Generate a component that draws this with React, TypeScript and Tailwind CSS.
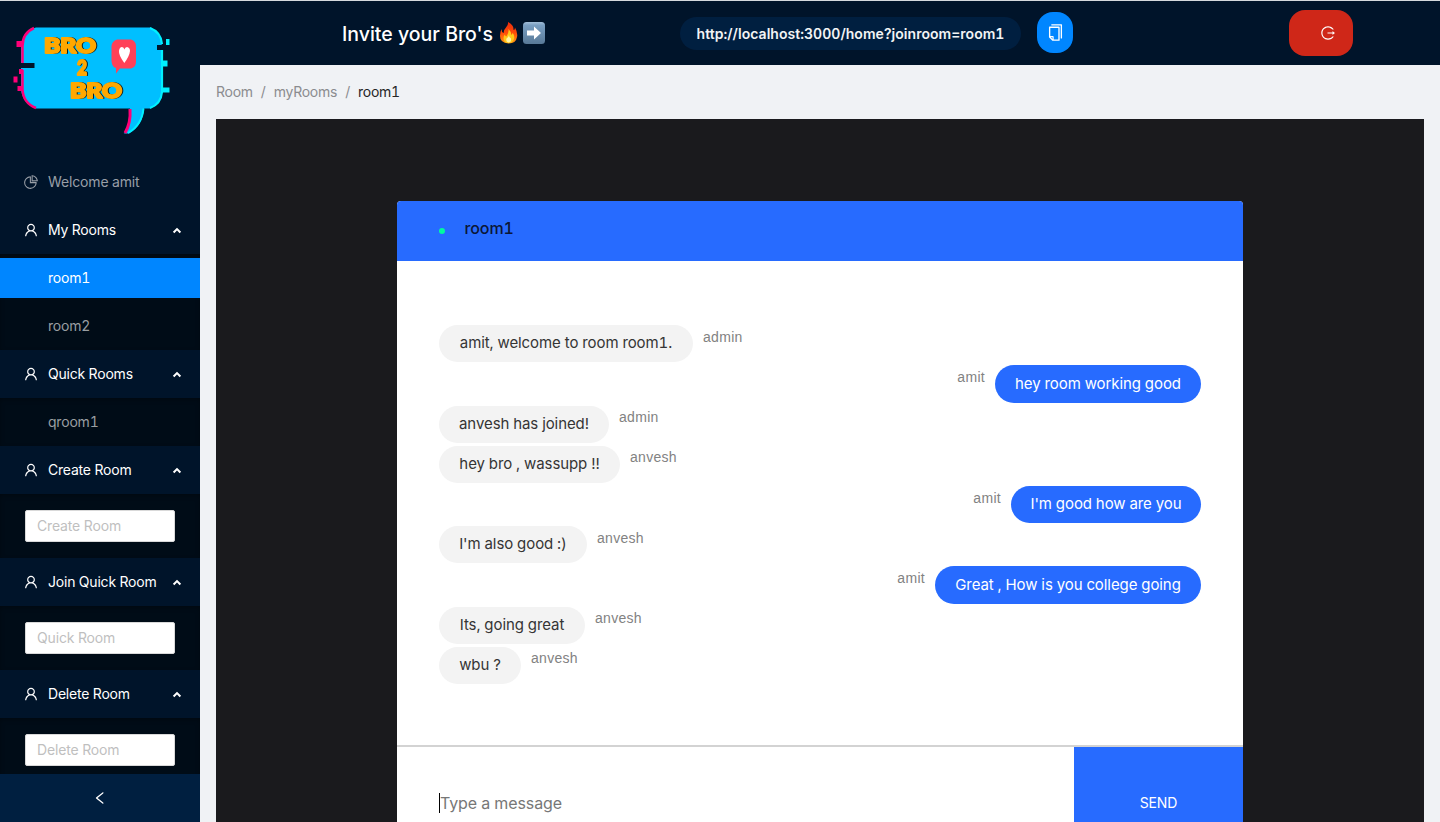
import React from "react";
import {
  AiOutlineCopy,
  AiOutlineLeft,
  AiOutlineLogout,
  AiOutlinePieChart,
  AiOutlineUser,
} from "react-icons/ai";

type Message = { user: string; text: string; width: string };

const messages: Message[] = [
  { user: "admin", text: "amit, welcome to room room1.", width: "w-[254px]" },
  { user: "amit", text: "hey room working good", width: "w-[206px]" },
  { user: "admin", text: "anvesh has joined!", width: "w-[170px]" },
  { user: "anvesh", text: "hey bro , wassupp !!", width: "w-[181px]" },
  { user: "amit", text: "I'm good how are you", width: "w-[190px]" },
  { user: "anvesh", text: "I'm also good :)", width: "w-[148px]" },
  { user: "amit", text: "Great , How is you college going", width: "w-[266px]" },
  { user: "anvesh", text: "Its, going great", width: "w-[146px]" },
  { user: "anvesh", text: "wbu ?", width: "w-[82px]" },
];

function Logo() {
  return (
    <svg width="200" height="157" viewBox="0 0 200 157" className="block shrink-0">
      <path d="M36 26.500H151Q162 33 162 46V91Q161 104 150 107.500H36Q22 102 21 88V47Q22 30 36 26.500Z" fill="#00bfff" />
      <path d="M34 27Q22.500 32 22.500 45V62M22.500 69V88Q23 102 36 107" fill="none" stroke="#ff0078" strokeWidth="2.500" />
      <path d="M16.500 40h6v6h-6zM19 68h4v5h-4zM13.500 75.500h4v6h-4zM17.500 85h5v5h-5z" fill="#ff0078" />
      <path d="M150 27Q161 31 162 43M162 49V91Q161 103 150 107" fill="none" stroke="#00f0ff" strokeWidth="2.200" />
      <path d="M166 38h3.500v6H166zM162 59.500h5.500v6H162zM162 86.500h7.500v5H162z" fill="#00f0ff" />
      <path d="M21 62h13.500v5H21zM157 44h9v5h-9z" fill="#00142a" />
      <path d="M130 107H144Q143 125 129 132.500H124Q131 122 130 107Z" fill="#00bfff" />
      <path d="M130 108Q131 122 125 132" fill="none" stroke="#ff0078" strokeWidth="3" />
      <path d="M143.500 107.500Q142 124 128 132" fill="none" stroke="#00f0ff" strokeWidth="2" />
      <g
        fontFamily="Lato"
        fontWeight="900"
        fontSize="21"
        strokeLinejoin="round"
        fill="#ffa800"
        stroke="#ffa800"
        strokeWidth="2"
        className="[filter:drop-shadow(1.500px_0.500px_0_#06202b)]"
      >
        <text x="44" y="52" textLength="52" lengthAdjust="spacingAndGlyphs">BRO</text>
        <text x="77" y="74" textLength="10" lengthAdjust="spacingAndGlyphs">2</text>
        <text x="70" y="97" textLength="52" lengthAdjust="spacingAndGlyphs">BRO</text>
      </g>
      <path d="M117 38.500H131Q136 40 136 45V61Q136 66 131 67.500H120L116 72.500V67Q112 66 111.500 60V45Q112 40 117 38.500Z" fill="#ff4158" />
      <path d="M124.300 62Q118.500 54 119 50Q119.500 46 122 46Q124 46 124.300 48.500Q125 46 127 46Q130 46.500 130 50Q129.500 55 124.300 62Z" fill="#fff" />
    </svg>
  );
}

function Fire() {
  return (
    <svg width="19" height="22" viewBox="0 0 19 22" className="ml-[5px] shrink-0">
      <defs>
        <linearGradient id="flame" x1="0" y1="0" x2="0" y2="1">
          <stop offset="0" stopColor="#e92b0c" />
          <stop offset="0.500" stopColor="#ff4b08" />
          <stop offset="1" stopColor="#ff9b12" />
        </linearGradient>
      </defs>
      <path d="M9 0Q15 3 14.500 8Q16 8 16 5.500Q19 11 18 15Q17 21.500 9.500 21.500Q1 21 1 14Q1 10 2.500 7Q2.500 10 4.500 11Q4.500 8 7 5.500Q9.500 3 9 0Z" fill="url(#flame)" />
      <path d="M9.500 7Q12.500 10 12 13Q14 12 13.500 10.500Q16 14 15 17Q13.500 21 9.500 21Q4.500 21 4.500 16Q4.500 13.500 6 12.500Q6 14.500 7.500 14.500Q10 11 9.500 7Z" fill="#ffc91a" />
      <path d="M10 13Q10 16 12 16.500Q12.500 20.500 9.500 20.500Q6.500 20 7.500 16.500Q9.500 15.500 10 13Z" fill="#fff5a8" />
    </svg>
  );
}

function ArrowBadge() {
  return (
    <svg width="22" height="22" viewBox="0 0 22 22" className="ml-[5px] shrink-0">
      <defs>
        <linearGradient id="badge" x1="0" y1="0" x2="0" y2="1">
          <stop offset="0" stopColor="#a3bfd9" />
          <stop offset="0.150" stopColor="#799fc2" />
          <stop offset="1" stopColor="#587997" />
        </linearGradient>
      </defs>
      <rect width="22" height="22" rx="3.500" fill="url(#badge)" />
      <path d="M4 8.500H11V4.500L18 11L11 17.500V13.500H4Z" fill="#fff" />
    </svg>
  );
}

function Caret() {
  return (
    <svg width="10" height="8" viewBox="0 0 10 8" className="ml-auto">
      <path d="M1.600 6.500L5 3.100L8.400 6.500" fill="none" stroke="#fff" strokeWidth="2" />
    </svg>
  );
}

function SubMenu({ title, children }: { title: string; children: React.ReactNode }) {
  return (
    <div>
      <div className="flex h-12 items-center pr-[18px] pl-[23px] text-white">
        <AiOutlineUser size={16} />
        <span className="ml-[9px] tracking-[-0.200px]">{title}</span>
        <Caret />
      </div>
      <div className="bg-[#000c17] shadow-[inset_0_2px_6px_-2px_rgba(0,0,0,0.45)]">{children}</div>
    </div>
  );
}

function RoomItem({ name, active }: { name: string; active?: boolean }) {
  return (
    <div className="py-1 tracking-[-0.200px]">
      <div className={active ? "flex h-10 items-center bg-[#0086ff] pl-12 text-white" : "flex h-10 items-center pl-12 text-[#999ea2]"}>{name}</div>
    </div>
  );
}

function RoomInput({ placeholder }: { placeholder: string }) {
  return (
    <div className="px-[25px] py-4">
      <input placeholder={placeholder} className="block h-8 w-[150px] rounded-[2px] border border-[#d9d9d9] bg-white px-[11px] pb-0.5 text-sm tracking-[-0.150px] outline-none placeholder:text-[#bfbfbf]" />
    </div>
  );
}

function Sidebar() {
  return (
    <aside className="flex w-[200px] shrink-0 flex-col bg-[#00142a] text-sm">
      <div className="min-h-0 flex-1 overflow-hidden">
        <Logo />
        <div className="flex h-12 items-center pl-[23px] text-[#999fa7]">
          <AiOutlinePieChart size={16} />
          <span className="ml-[9px] tracking-[-0.150px]">Welcome amit</span>
        </div>
        <SubMenu title="My Rooms">
          <RoomItem name="room1" active />
          <RoomItem name="room2" />
        </SubMenu>
        <SubMenu title="Quick Rooms">
          <RoomItem name="qroom1" />
        </SubMenu>
        <SubMenu title="Create Room">
          <RoomInput placeholder="Create Room" />
        </SubMenu>
        <SubMenu title="Join Quick Room">
          <RoomInput placeholder="Quick Room" />
        </SubMenu>
        <SubMenu title="Delete Room">
          <RoomInput placeholder="Delete Room" />
        </SubMenu>
      </div>
      <div className="flex h-12 shrink-0 items-center justify-center bg-[#001f40] text-white">
        <AiOutlineLeft size={16} />
      </div>
    </aside>
  );
}

function MessageRow({ message }: { message: Message }) {
  const own = message.user === "amit";
  return (
    <div className={own ? "mt-[3px] flex h-[37.200px] flex-row-reverse" : "mt-[3px] flex h-[37.200px]"}>
      <div
        className={
          (own ? "bg-[#276bff] text-white " : "bg-[#f3f3f3] text-[#353535] ") +
          "flex h-full shrink-0 items-center justify-center rounded-[20px] pb-[0.500px] text-[15px] tracking-[-0.080px] whitespace-nowrap " +
          message.width
        }
      >
        {message.text}
      </div>
      <span className="mx-[10px] pt-[1.500px] font-['Liberation_Sans',sans-serif] text-[14px] leading-[20px] tracking-[0.300px] text-[#828282]">
        {message.user}
      </span>
    </div>
  );
}

export default function App() {
  return (
    <div className="flex h-[822px] w-[1440px] flex-col overflow-hidden bg-[#f0f2f5] font-['Inter',sans-serif] tabular-nums">
      <div className="h-px shrink-0 bg-[#d5d9dd]" />
      <div className="flex min-h-0 flex-1">
        <Sidebar />
        <div className="flex min-w-0 flex-1 flex-col">
          <header className="flex h-16 shrink-0 items-center bg-[#00142a] pr-[87px] pl-[142px] text-white">
            <h1 className="w-[152px] pt-[3px] text-[19.500px] font-medium whitespace-nowrap">Invite your Bro's</h1>
            <Fire />
            <ArrowBadge />
            <div className="ml-[135px] flex h-[33px] w-[341px] items-center justify-center rounded-full bg-[#001f40] pt-px text-sm font-semibold tracking-[0.040px] text-[#f2f4f5]">
              http://localhost:3000/home?joinroom=room1
            </div>
            <button className="mb-[2px] ml-4 flex h-[41px] w-9 items-center justify-center rounded-[16px] bg-[#0086ff]">
              <AiOutlineCopy size={19} />
            </button>
            <button className="ml-auto flex h-[46px] w-16 items-center justify-center rounded-[16px] bg-[#cf2718] pl-[14px]">
              <AiOutlineLogout size={16} />
            </button>
          </header>
          <main className="flex min-h-0 flex-1 flex-col px-4">
            <nav className="flex h-[54px] shrink-0 items-center text-sm tracking-[-0.250px] text-[#8b8c8f]">
              <span>Room</span>
              <span className="mx-2">/</span>
              <span>myRooms</span>
              <span className="mx-2">/</span>
              <span className="text-[#262626]">room1</span>
            </nav>
            <div className="flex min-h-0 flex-1 justify-center bg-[#1a1a1d] pt-[82px]">
              <section className="flex w-[846px] flex-col overflow-hidden rounded-t-[4px] bg-white">
                <div className="flex h-[60px] shrink-0 items-center bg-[#276bff] px-[42px] pb-1">
                  <span className="mt-[3px] size-[6px] rounded-full bg-[#00faa0]" />
                  <span className="mb-0.5 ml-[19.500px] text-base font-medium tracking-[-0.100px] text-[#0b1736]">room1</span>
                </div>
                <div className="h-[484px] shrink-0 px-[42px] pt-[61.300px]">
                  {messages.map((message) => (
                    <MessageRow key={message.text} message={message} />
                  ))}
                </div>
                <div className="flex min-h-0 flex-1 border-t-2 border-[#d3d3d3]">
                  <div className="flex flex-1 items-start pt-[46px] pl-[42px]">
                    <span className="h-5 w-px bg-black" />
                    <span className="text-[16px] leading-[21px] tracking-[-0.100px] text-[#777]">Type a message</span>
                  </div>
                  <button className="flex w-[169px] items-start justify-center bg-[#276bff] pt-[46px] text-sm leading-[20px] tracking-[-0.100px] text-white">SEND</button>
                </div>
              </section>
            </div>
          </main>
        </div>
      </div>
    </div>
  );
}
